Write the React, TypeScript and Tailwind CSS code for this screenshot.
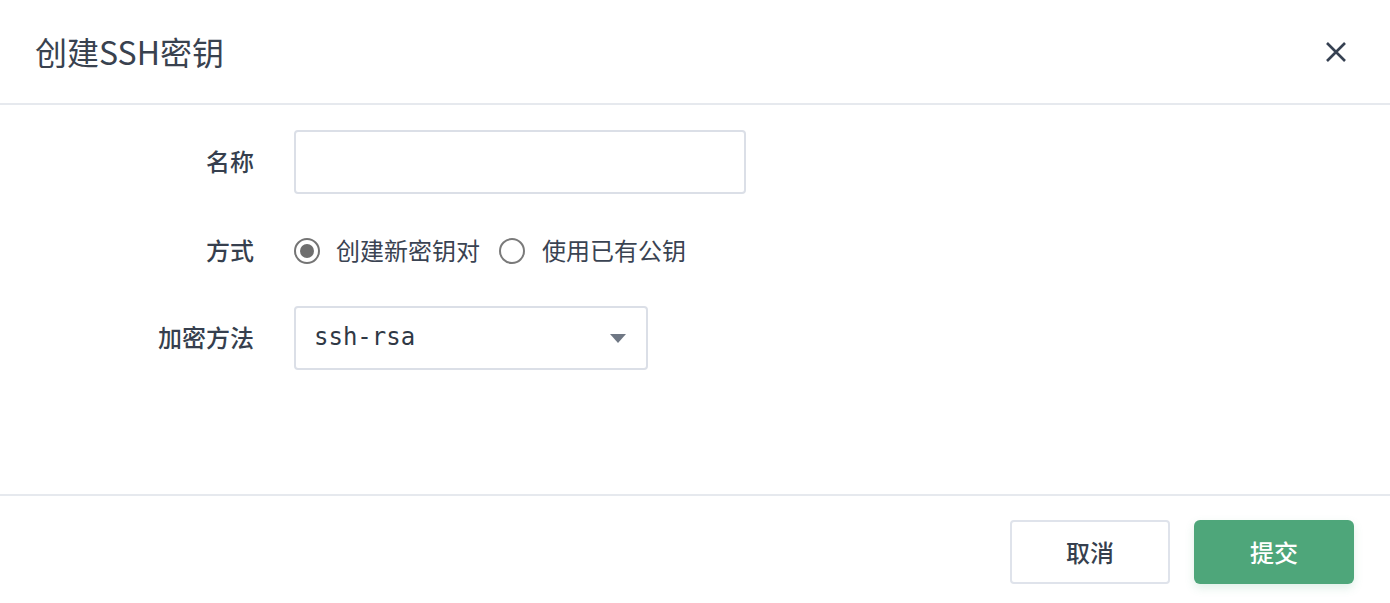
import React from "react";

const font = '"Noto Sans CJK SC", "Noto Sans", sans-serif';

export default function App() {
  return (
    <div
      className="w-[1390px] h-[603px] bg-white flex flex-col text-[#363f4e] overflow-hidden"
      style={{ fontFamily: font }}
    >
      {/* Header */}
      <div className="h-[105px] flex items-center justify-between pl-[35px] pr-[42px] border-b-2 border-[#e6e9ee] shrink-0">
        <h1 className="text-[32px] leading-none font-normal -mt-[2px] text-[#39424f]">创建SSH密钥</h1>
        <button className="w-[24px] h-[24px] flex items-center justify-center">
          <svg width="22" height="22" viewBox="0 0 22 22">
            <path d="M2 2 L20 20 M20 2 L2 20" stroke="#364152" strokeWidth="2.6" strokeLinecap="butt" />
          </svg>
        </button>
      </div>

      {/* Body */}
      <div className="flex-1 flex flex-col pt-[25px]">
        <div className="flex items-center h-[64px]">
          <label className="w-[254px] text-right text-[24px] font-medium leading-none -mt-[2px]">名称</label>
          <div className="ml-[40px] w-[452px] h-[64px] border-2 border-[#dbdfe7] rounded-[4px] bg-white" />
        </div>

        <div className="flex items-center h-[40px] mt-[37px]">
          <label className="w-[254px] text-right text-[24px] font-medium leading-none -mt-[3px]">方式</label>
          <div className="ml-[40px] flex items-center">
            <span className="w-[26px] h-[26px] rounded-full border-2 border-[#747474] flex items-center justify-center">
              <span className="w-[14px] h-[14px] rounded-full bg-[#6e6e6e]" />
            </span>
            <span className="ml-[16px] text-[24px] leading-none text-[#3a4352] -mt-[3px]">创建新密钥对</span>
            <span className="ml-[19px] w-[26px] h-[26px] rounded-full border-2 border-[#7a7a7a]" />
            <span className="ml-[17px] text-[24px] leading-none text-[#3a4352] -mt-[3px]">使用已有公钥</span>
          </div>
        </div>

        <div className="flex items-center h-[64px] mt-[35px]">
          <label className="w-[254px] text-right text-[24px] font-medium leading-none -mt-[2px]">加密方法</label>
          <div className="ml-[40px] w-[354px] h-[64px] border-2 border-[#dbdfe7] rounded-[4px] bg-white flex items-center justify-between pl-[18px] pr-[20px]">
            <span
              className="text-[24px] leading-none text-[#2f3845] -mt-[2px]"
              style={{ fontFamily: '"DejaVu Sans Mono", monospace' }}
            >
              ssh-rsa
            </span>
            <svg width="16" height="9" viewBox="0 0 16 9">
              <path d="M0 0 L16 0 L8 9 Z" fill="#6f7784" />
            </svg>
          </div>
        </div>
      </div>

      {/* Footer */}
      <div className="h-[109px] border-t-2 border-[#e6e9ee] flex justify-end items-start pt-[24px] pr-[36px] gap-[24px] shrink-0">
        <button className="w-[160px] h-[64px] border-2 border-[#dfe3eb] rounded-[4px] bg-white text-[24px] font-medium text-[#363f4e] flex items-center justify-center">
          取消
        </button>
        <button className="w-[160px] h-[64px] rounded-[6px] bg-[#4ea67a] text-[24px] font-medium text-white flex items-center justify-center shadow-[0_4px_10px_rgba(78,166,122,0.18)]">
          提交
        </button>
      </div>
    </div>
  );
}
